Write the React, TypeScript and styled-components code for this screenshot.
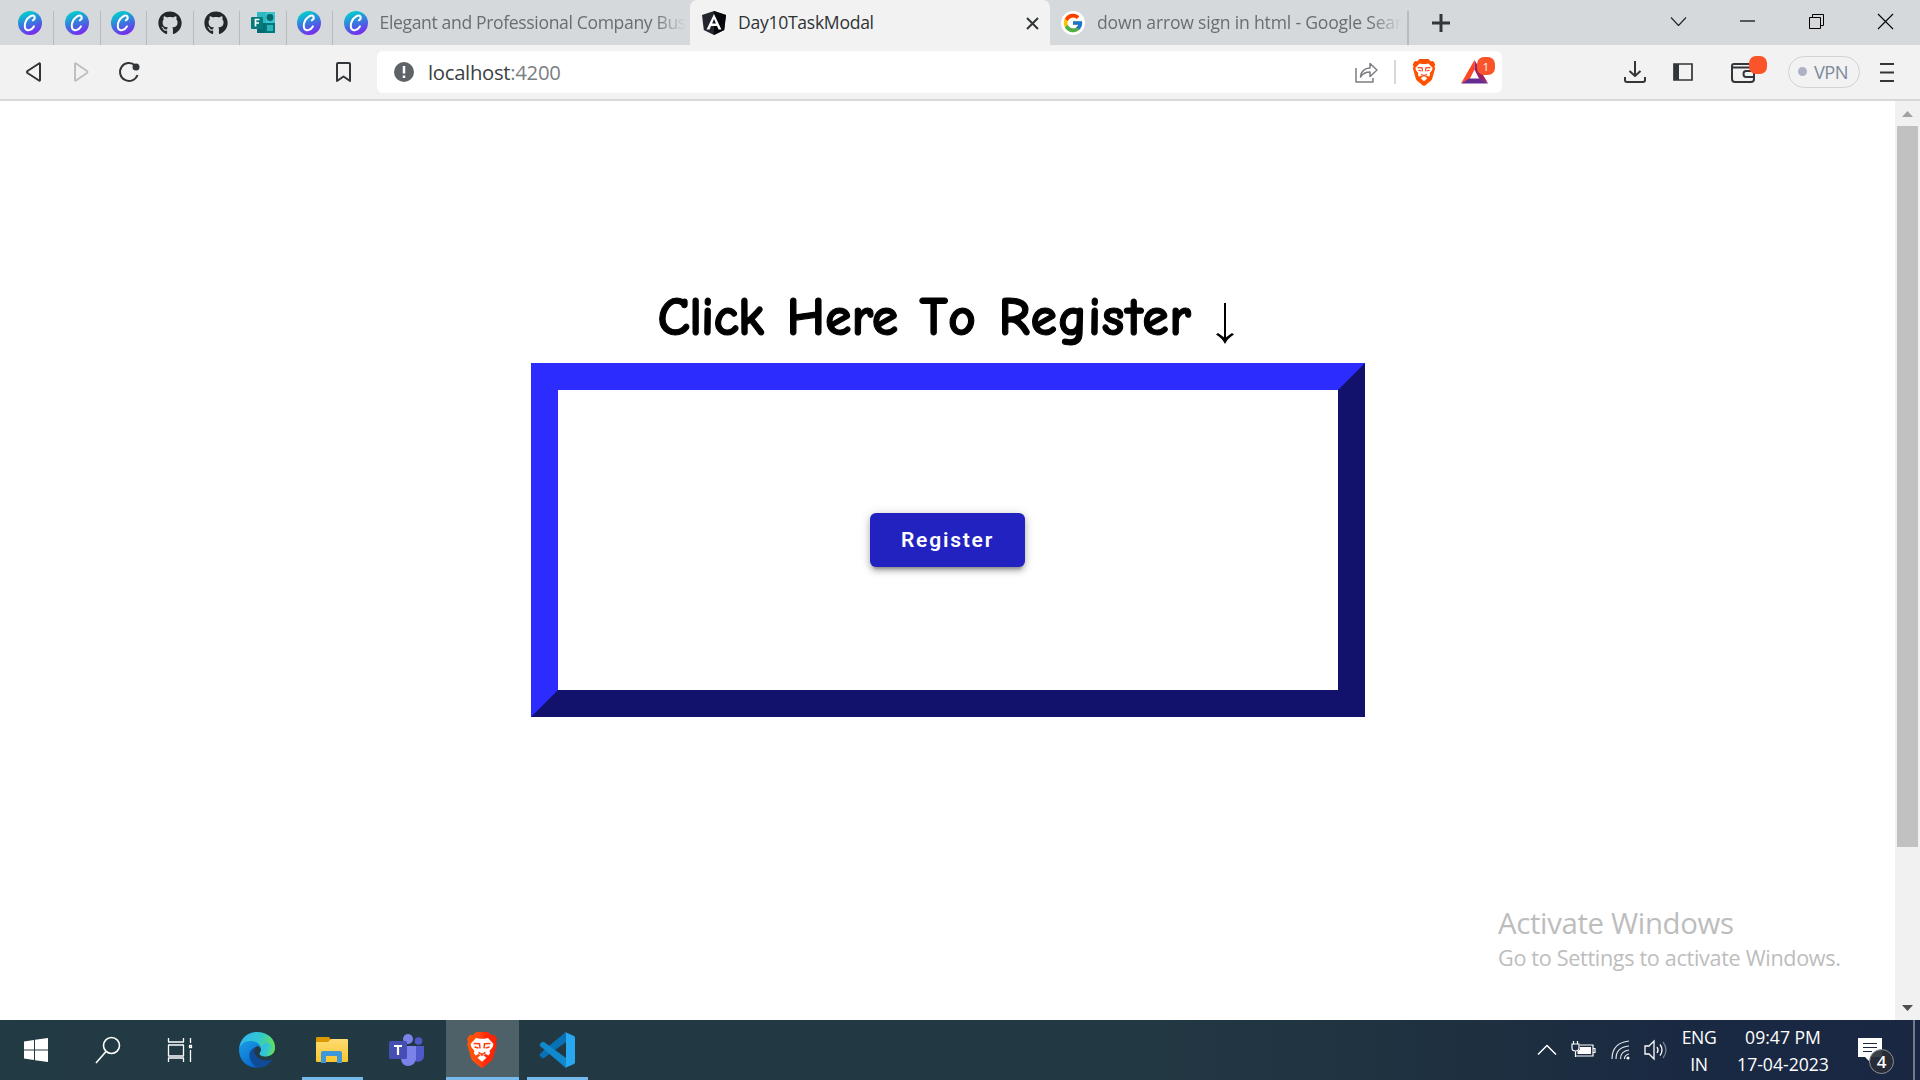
import React from "react";
import styled, { createGlobalStyle, css } from "styled-components";
import { FaGithub } from "react-icons/fa";
import { FcGoogle } from "react-icons/fc";

const Global = createGlobalStyle`
  *{box-sizing:border-box}
  body{margin:0;background:#fff;font-family:"Open Sans","Noto Sans",sans-serif}
  svg{display:block;flex:none;overflow:visible}
`;
const Screen = styled.div`width:1920px;height:1080px;display:flex;flex-direction:column;overflow:hidden;`;
const TabStrip = styled.div`height:45px;display:flex;background:#d5d9dc;color:#6a6e71;`;
const PinnedTab = styled.div<{ $w: number }>`
  width:${p => p.$w}px;height:34px;margin-top:11px;padding-right:11px;
  display:flex;justify-content:flex-end;align-items:flex-start;
  border-right:1.5px solid #b8bcbe;flex:none;
`;
const Tab = styled.div<{ $w: number; $active?: boolean; $pad: number }>`
  width:${p => p.$w}px;height:45px;padding:11px 6px 0 ${p => p.$pad}px;display:flex;gap:12px;flex:none;
  ${p => p.$active && css`background:#f2f2f2;border-radius:7px 7px 0 0;color:#2f3235;`}
`;
const TabTitle = styled.span<{ $ls: number; $fade?: boolean; $medium?: boolean }>`
  flex:1;font-size:17.6px;line-height:23px;white-space:nowrap;letter-spacing:${p => p.$ls}px;
  font-weight:${p => (p.$medium ? 500 : 400)};
  ${p => p.$fade && css`mask-image:linear-gradient(90deg,#000 calc(100% - 32px),transparent);`}
`;
const TabDivider = styled.i`width:1.5px;height:34px;margin-top:11px;background:#b8bcbe;flex:none;`;
const TabClose = styled.div`width:24px;height:24px;display:grid;place-items:center;`;
const NewTab = styled.div`width:65px;display:grid;place-items:center;`;
const WindowButtons = styled.div`margin-left:auto;display:flex;height:42px;`;
const WindowButton = styled.div`width:69px;display:grid;place-items:center;`;
const Toolbar = styled.div`height:56px;display:flex;align-items:center;background:#f2f2f2;border-bottom:2px solid #d5d9dc;`;
const NavButtons = styled.div`width:377px;display:flex;padding:0 23px;align-items:center;`;
const NavSlot = styled.div<{ $w: number }>`width:${p => p.$w}px;display:flex;`;
const Address = styled.div`
  width:1125px;height:42px;background:#fff;border-radius:6px;display:flex;align-items:center;padding:0 8px 0 17px;
`;
const Url = styled.span`margin-left:14px;font-size:20.3px;letter-spacing:-.3px;color:#3c3f42;flex:1;span{color:#7b7e81}`;
const AddressDivider = styled.i`width:2px;height:24px;background:#d6d8da;margin:0 16px;`;
const RewardsWrap = styled.div`position:relative;margin-left:25px;margin-right:6px;`;
const RewardsBadge = styled.span`
  position:absolute;left:16px;top:-3px;width:18px;height:18px;border-radius:7px;background:#fb542b;color:#fff;
  font-size:11px;line-height:19px;text-align:center;
`;
const Tools = styled.div`flex:1;display:flex;align-items:center;padding-left:122px;`;
const Tool = styled.div<{ $w: number }>`width:${p => p.$w}px;flex:none;display:flex;`;
const Vpn = styled.div`
  width:72px;height:32px;border:1.5px solid #d0d3d6;border-radius:16px;display:flex;align-items:center;gap:7px;
  padding:0 0 2px 9px;color:#7d8a9b;font-size:18.3px;letter-spacing:-.6px;margin-right:20px;
`;
const VpnDot = styled.i`width:9px;height:9px;border-radius:50%;background:#aeb1c3;margin-top:1px;`;
const Viewport = styled.div`height:919px;display:flex;`;
const Page = styled.main`flex:1;display:flex;flex-direction:column;align-items:center;padding-top:182px;`;
const Heading = styled.h1`
  margin:0;width:834px;height:80px;padding-left:127px;display:flex;align-items:flex-start;
  font:700 54px/70px "Comic Sans MS","Comic Neue",Lato,sans-serif;color:#000;white-space:nowrap;
  -webkit-text-stroke:1.1px #000;
`;
const Word = styled.span<{ $w: number; $ls: number }>`width:${p => p.$w}px;letter-spacing:${p => p.$ls}px;`;
const ArrowSlot = styled.span`padding-top:20px;`;
const Frame = styled.section`
  width:834px;height:354px;border:27px solid;border-color:#2c2cff #12126c #12126c #2c2cff;
  display:grid;place-items:center;
`;
const RegisterButton = styled.button`
  width:155px;height:54px;border:0;border-radius:6px;background:#2222c1;color:#fff;padding:0;
  font:600 21px/54px Roboto,sans-serif;letter-spacing:1.8px;
  box-shadow:0 5px 3px -3px rgba(0,0,0,.24),0 4px 6px rgba(0,0,0,.22),0 1px 12px rgba(0,0,0,.16);
`;
const Scrollbar = styled.div`
  width:25px;background:#f1f1f1;display:flex;flex-direction:column;align-items:center;justify-content:space-between;
`;
const ScrollArrow = styled.div`height:25px;display:grid;place-items:center;`;
const Thumb = styled.div`width:21px;height:721px;background:#c1c1c1;margin-bottom:auto;`;
const Watermark = styled.div`position:absolute;left:1498px;top:901px;color:#bdbdbd;white-space:nowrap;`;
const WatermarkTitle = styled.div`font-size:29.4px;line-height:44px;letter-spacing:-.35px;`;
const WatermarkText = styled.div`font-size:21.6px;line-height:26px;letter-spacing:-.32px;`;
const Taskbar = styled.footer`
  height:60px;display:flex;color:#fff;background:linear-gradient(90deg,#223a43 0,#223843 60%,#1e3040 77%,#1a2942 88%,#192743);
`;
const TaskItem = styled.div<{ $w: number; $line?: number; $active?: boolean }>`
  width:${p => p.$w}px;height:60px;display:flex;align-items:center;justify-content:center;flex:none;
  ${p => p.$line && css`padding-right:1px;`}
  ${p => p.$active && css`background-color:#4e6169;`}
  ${p => p.$line && css`background-image:linear-gradient(#76b9ed,#76b9ed);background-size:${p.$line}px 3px;background-position:center bottom;background-repeat:no-repeat;`}
`;
const Tray = styled.div`margin-left:auto;display:flex;align-items:center;`;
const TraySlot = styled.div<{ $w: number }>`width:${p => p.$w}px;display:flex;justify-content:center;`;
const TrayText = styled.div<{ $w: number; $ls: number }>`
  width:${p => p.$w}px;font-size:17.6px;line-height:27.5px;text-align:center;letter-spacing:${p => p.$ls}px;white-space:nowrap;padding-top:2px;
`;
const Notify = styled.div`width:74px;position:relative;display:flex;padding-left:19px;`;
const Count = styled.span`
  position:absolute;left:30px;top:11px;width:25px;height:25px;border-radius:50%;background:#292d35e8;border:1px solid #8b8f98;
  font-size:17px;font-weight:600;line-height:23px;text-align:center;
`;
const ShowDesktop = styled.i`width:7px;height:60px;border-left:2px solid #74798a;`;

const Canva = () => (
  <svg width="24" height="24" viewBox="0 0 24 24">
    <defs>
      <linearGradient id="cv" x1=".3" y1="0" x2=".65" y2="1"><stop offset=".1" stopColor="#08c5cf" /><stop offset=".5" stopColor="#3979df" /><stop offset="1" stopColor="#7d24ee" /></linearGradient>
    </defs>
    <circle cx="12" cy="12" r="12" fill="url(#cv)" />
    <path d="M14.800 9.300c1.400-.6 2.200-2.300 1.700-3.700-.6-1.500-2.500-1.500-4.300-.2C8.600 7.800 6.700 11.700 6.800 15.200c.1 3 1.900 4.500 4.400 3.900 2-.5 3.700-1.900 4.700-3.700" fill="none" stroke="#fff" strokeWidth="2" strokeLinecap="round" />
  </svg>
);
const Forms = () => (
  <svg width="24" height="24" viewBox="0 0 24 24">
    <path fill="#37c6d0" d="M6 1h18v11H6z" /><path fill="#036c70" d="M6 12h9v10H6z" /><path fill="#1a9ba1" d="M6 1h9v11H6z" opacity=".3" />
    <path fill="#03787c" d="M14 12h10v10H14z" /><path fill="#2bb4ba" d="M16 14h6v6h-6z" /><circle cx="19" cy="6.500" r="3.400" fill="#05686c" />
    <rect y="6" width="12" height="12" rx="1" fill="#077a7d" />
    <path d="M4.500 15.500v-7h4M4.500 12h3.500" fill="none" stroke="#fff" strokeWidth="1.700" />
  </svg>
);
const Angular = () => (
  <svg width="24" height="24" viewBox="0 0 24 24">
    <path d="M12 0l12 4-1.800 15L12 24 1.800 19 0 4z" fill="#23262e" /><path d="M12 0l12 4-1.800 15L12 24z" fill="#05070b" />
    <path fillRule="evenodd" d="M12 3L4.600 18.500h2.900L9 15h6l1.500 3.500h2.900zM10.100 12.500L12 8l1.900 4.500z" fill="#fff" />
  </svg>
);
const BraveLion = ({ w, h }: { w: number; h: number }) => (
  <svg width={w} height={h} viewBox="0 0 30 36">
    <defs><linearGradient id="lion"><stop stopColor="#ff5500" /><stop offset=".4" stopColor="#ff4a10" /><stop offset=".6" stopColor="#ff2b0a" /><stop offset="1" stopColor="#ff2000" /></linearGradient></defs>
    <path d="M9 0h12l3 3 3-.3 3 4.300-1 3 .8 2.500L26 26q-.7 2.500-3 4l-6.500 5.200q-1.500 1-3 0L7 30q-2.300-1.500-3-4L.2 12.500 1 10 0 7l3-4.300 3 .3z" fill={w > 26 ? "url(#lion)" : "#ff5000"} />
    <path d="M9 6l3.500.8h5L21 6l5.500 6-.8 3-3.200 4 .7 2-1.700 2.500-3-1.500-2.200 1.300 3.200 2.500-4.500 4-4.500-4 3.200-2.500L11.500 22l-3 1.500L6.800 21l.7-2-3.200-4-.8-3z" fill="#fff" />
    <path d="M6.500 11.500l6 .3.500 4.500M23.500 11.500l-6 .3-.5 4.500M7.500 15l4 1M22.500 15l-4 1M11.500 20.500l3.500 1.800 3.500-1.800M15 22v2" fill="none" stroke="#ff3d0d" strokeWidth="1.500" />
  </svg>
);
const Edge = () => (
  <svg width="36" height="36" viewBox="0 0 36 36">
    <defs>
      <linearGradient id="e1" x1="0" y1=".2" x2="1" y2=".5"><stop stopColor="#30b4f0" /><stop offset=".55" stopColor="#31c8cf" /><stop offset="1" stopColor="#67e34e" /></linearGradient>
      <linearGradient id="e2" x1="0" y1="0" x2=".6" y2="1"><stop stopColor="#1c9de4" /><stop offset="1" stopColor="#0669d0" /></linearGradient>
    </defs>
    <path d="M0 17C1 7 8 0 18 0c11 0 18 7 18 15 0 6-4 9.500-9.500 9.500-4 0-6-1.500-6-2.700 0-1 1.500-1.500 1.500-4 0-4-4-7-9.500-7C6 10.800 1.500 14 0 17z" fill="url(#e1)" />
    <path d="M0 18c.5-5 5-9 11-9 7 0 11 4 11 8-1-2-3-3-5-2-4 2-7 15 6 19.500C13 38.500 0 31 0 18z" fill="url(#e2)" />
    <path d="M16 15c-4 3-5 4-5.500 7C10 29 15 35.500 21 35.500c5 0 9-3 12.500-8 .5-.9-.3-1.300-1-.8-3 1.600-8 2-12-.2-5-2.800-6.500-7.500-4.500-11.500z" fill="#114a96" />
    <path d="M22 18c-.5 2-1.600 2.700-1.500 3.800.1 1.200 2 2.700 6 2.700 3 0 5.600-1 7.300-3L36 26l-3 1.500c-4 1.500-9 1-12.500-1-3.500-2-5.500-6-4.500-10 .6-1.700 2-2.500 3.200-2.300z" fill="#223a43" />
    <path d="M22 18c0 2-1.500 2.800-1.500 3.800.1 1.200 2 2.700 6 2.700C32 24.500 36 21 36 15l-9-5-5 5z" fill="url(#e1)" />
  </svg>
);
const Folder = () => (
  <svg width="32" height="27" viewBox="0 0 32 27">
    <defs><linearGradient id="fd" x2="0" y2="1"><stop stopColor="#ffdc73" /><stop offset="1" stopColor="#f9c62f" /></linearGradient></defs>
    <path d="M0 1q0-1 1-1h12l2 3-3 5H0z" fill="#dc9800" /><path d="M0 5h12l3-3h16q1 0 1 1v21q0 1-1 1H1q-1 0-1-1z" fill="url(#fd)" />
    <path d="M5 26V16q0-2 2-2h17q2 0 2 2v10h-5v-7H10v7z" fill="#3e97d9" />
  </svg>
);
const Teams = () => (
  <svg width="35" height="32" viewBox="0 0 35 32">
    <circle cx="29.500" cy="7" r="3.800" fill="#5059c9" /><circle cx="19" cy="5" r="5" fill="#7b83eb" />
    <path d="M24 12h11v10a6 6 0 01-11 3z" fill="#5059c9" /><path d="M12 12h15v12c0 5-4 8-8 8s-7-3-7-8z" fill="#7b83eb" />
    <rect y="7" width="18" height="18" rx="1.500" fill="#454eb3" /><path d="M5 12h8M9 12v9" stroke="#fff" strokeWidth="2.200" />
  </svg>
);
const VSCode = () => (
  <svg width="36" height="36" viewBox="0 0 36 36">
    <path d="M1 22l5-5L27 0v10L5 26q-1 .7-2 0l-2-2q-1-1 0-2z" fill="#0871b5" />
    <path d="M1 14q-1-1 0-2l2-2q1-.6 2 0l22 16v10z" fill="#1189cd" />
    <path d="M26 0l9 4q1 .6 1 2v24q0 1.400-1 2l-9 4q1-.5 1-2V2q0-1.500-1-2z" fill="#28a8f0" />
  </svg>
);
const pinnedWidths = [54, 46.5, 46.5, 46.5, 46, 47, 46];
const pins = [Canva, Canva, Canva, FaGithub, FaGithub, Forms, Canva];
const Stroke = ({ w, h, d, c = "#323639", t = 2 }: { w: number; h: number; d: string; c?: string; t?: number }) => (
  <svg width={w} height={h} viewBox={`0 0 ${w} ${h}`} fill="none" stroke={c} strokeWidth={t} strokeLinejoin="round"><path d={d} /></svg>
);

export default function App() {
  return (
    <Screen>
      <Global />
      <TabStrip>
        {pins.map((Icon, i) => <PinnedTab key={i} $w={pinnedWidths[i]}><Icon size={24} color="#23272b" /></PinnedTab>)}
        <Tab $w={357.5} $pad={11}><Canva /><TabTitle $ls={-0.37} $fade>Elegant and Professional Company Bus</TabTitle></Tab>
        <Tab $w={360} $pad={12} $active><Angular /><TabTitle $ls={-0.3} $medium>Day10TaskModal</TabTitle><TabClose><Stroke w={11} h={11} d="M0 0l11 11M11 0L0 11" /></TabClose></Tab>
        <Tab $w={357} $pad={11}>
          <svg width="24" height="24" viewBox="0 0 24 24"><circle cx="12" cy="12" r="12" fill="#fff" /><FcGoogle x={1} y={1} size={22} /></svg>
          <TabTitle $ls={-0.2} $fade>down arrow sign in html - Google Sear</TabTitle>
        </Tab>
        <TabDivider />
        <NewTab><Stroke w={18} h={18} d="M9 0v18M0 9h18" t={3} /></NewTab>
        <WindowButtons>
          <WindowButton><Stroke w={15} h={9} d="M0 .5l7.500 8 7.500-8" c="#222" t={1.1} /></WindowButton>
          <WindowButton><Stroke w={15} h={2} d="M0 1h15" c="#000" t={1.2} /></WindowButton>
          <WindowButton><Stroke w={15} h={15} d="M.5 3.500h11v11H.5zM3.500 3V.5h11v11h-2.500" c="#000" t={1} /></WindowButton>
          <WindowButton><Stroke w={15} h={15} d="M0 0l15 15M15 0L0 15" c="#000" t={1.1} /></WindowButton>
        </WindowButtons>
      </TabStrip>
      <Toolbar>
        <NavButtons>
          <NavSlot $w={50}><Stroke w={20} h={20} d="M17 2v16q0 1-1 .5L4.500 11q-1-1 0-2L16 1.500q1-.5 1 .5z" /></NavSlot>
          <NavSlot $w={46}><Stroke w={20} h={20} d="M2 2v16q0 1 1 .5L14 11q1-1 0-2L3 1.500Q2 1 2 2z" c="#bdbfc0" /></NavSlot>
          <NavSlot $w={216}>
            <svg width="21" height="21" viewBox="0 0 21 21"><path d="M16 3.200A9 9 0 1018.500 13" fill="none" stroke="#323639" strokeWidth="2" /><circle cx="17" cy="5" r="3.500" fill="#323639" /></svg>
          </NavSlot>
          <Stroke w={16} h={20} d="M2 2q0-1 1-1h11q1 0 1 1v17l-6.500-4.500L2 19z" />
        </NavButtons>
        <Address>
          <svg width="20" height="20" viewBox="0 0 20 20"><circle cx="10" cy="10" r="10" fill="#5e6368" /><path d="M10 4v7.500M10 13.500V16" stroke="#fff" strokeWidth="2.500" /></svg>
          <Url>localhost<span>:4200</span></Url>
          <Stroke w={23} h={21} d="M1 6v14h17v-4M5.500 15c0-5 4-9 9.500-9V1.500L22 8l-7 6.500V10c-4 0-7 1-9.500 5z" c="#7b7d80" t={1.5} />
          <AddressDivider />
          <BraveLion w={24} h={27} />
          <RewardsWrap>
            <svg width="27" height="24" viewBox="0 0 27 24"><path d="M13.500 0L0 23.500l9-5 4.500-9z" fill="#ff4724" /><path d="M13.500 0L27 23.500l-9-5-4.500-9z" fill="#9e1f63" /><path d="M0 23.500h27l-8-5H8z" fill="#662d91" /></svg>
            <RewardsBadge>1</RewardsBadge>
          </RewardsWrap>
        </Address>
        <Tools>
          <Tool $w={49}><Stroke w={22} h={22} d="M11 0v15M5.500 10l5.500 5 5.500-5M1 16v3q0 2 2 2h16q2 0 2-2v-3" /></Tool>
          <Tool $w={58}><svg width="20" height="18" viewBox="0 0 20 18"><path d="M1 1h18v16H1z" fill="none" stroke="#323639" strokeWidth="1.700" /><path d="M1 1h5v16H1z" fill="#323639" /></svg></Tool>
          <Tool $w={57}><svg width="36" height="32" viewBox="0 0 36 32"><path d="M23 10V9q0-1-2-1H3Q1 8 1 10v13q0 3 3 3h16q3 0 3-3v-1M1 11.500h20M23 15h-8q-2.500 0-2.500 3t2.500 3h8z" fill="none" stroke="#323639" strokeWidth="2" /><rect x="18" y="0" width="18" height="18" rx="7" fill="#fb542b" /></svg></Tool>
          <Vpn><VpnDot />VPN</Vpn>
          <Stroke w={14} h={19} d="M0 1h14M0 9.500h14M0 18h14" t={2.2} />
        </Tools>
      </Toolbar>
      <Viewport>
        <Page>
          <Heading><Word $w={129} $ls={-0.8}>Click</Word><Word $w={133} $ls={0}>Here</Word><Word $w={79} $ls={4.5}>To</Word><Word $w={217} $ls={0.6}>Register</Word><ArrowSlot><svg width="18" height="42" viewBox="0 0 18 42"><path d="M9 0v38" stroke="#000" strokeWidth="2" /><path d="M9 41Q6 35 0 31.500L2 30l7 5 7-5 2 1.500Q12 35 9 41z" /></svg></ArrowSlot></Heading>
          <Frame><RegisterButton>Register</RegisterButton></Frame>
        </Page>
        <Scrollbar>
          <ScrollArrow><svg width="11" height="6"><path d="M0 6l5.500-6L11 6z" fill="#a3a3a3" /></svg></ScrollArrow>
          <Thumb />
          <ScrollArrow><svg width="11" height="6"><path d="M0 0l5.500 6L11 0z" fill="#505050" /></svg></ScrollArrow>
        </Scrollbar>
      </Viewport>
      <Watermark><WatermarkTitle>Activate Windows</WatermarkTitle><WatermarkText>Go to Settings to activate Windows.</WatermarkText></Watermark>
      <Taskbar>
        <TaskItem $w={72}><svg width="24" height="24" viewBox="0 0 24 24" fill="#fff"><path d="M0 3.500l10-1.500v9.500H0zM11 1.800L24 0v11.500H11zM0 12.500h10V22L0 20.500zM11 12.500h13V24l-13-1.800z" /></svg></TaskItem>
        <TaskItem $w={72}><svg width="24" height="28" viewBox="0 0 24 28" fill="none" stroke="#fff" strokeWidth="1.600"><circle cx="15.500" cy="9.500" r="8" /><path d="M10 15.500L0 27" /></svg></TaskItem>
        <TaskItem $w={72}><Stroke w={25} h={24} d="M.5 0v4h15V0M.5 7h15v11H.5zM.5 24v-4h15v4M22.500 0v5M22.500 12v12M21.500 7.500h2v2h-2z" c="#fff" t={1.3} /></TaskItem>
        <TaskItem $w={82}><Edge /></TaskItem>
        <TaskItem $w={69} $line={61}><Folder /></TaskItem>
        <TaskItem $w={79}><Teams /></TaskItem>
        <TaskItem $w={73} $active $line={73}><BraveLion w={30} h={36} /></TaskItem>
        <TaskItem $w={77} $line={61}><VSCode /></TaskItem>
        <Tray>
          <TraySlot $w={36}><Stroke w={18} h={10} d="M0 9.500L9 .5l9 9" c="#fff" t={1.5} /></TraySlot>
          <TraySlot $w={37}><svg width="25" height="18" viewBox="0 0 25 18" fill="none" stroke="#fff" strokeWidth="1.200"><path d="M9 4h13v11H5M22 7.500h2v4h-2M1 3h7v4q0 3-3.500 3T1 7zM2.500 3V0M6.500 3V0M4.500 10v6" /><path d="M9 6h11v7H6.500v-2.500l2.500-2z" fill="#fff" stroke="none" /></svg></TraySlot>
          <TraySlot $w={37}><svg width="19" height="20" viewBox="0 0 19 20" fill="none" stroke="#e2e6ea" strokeWidth="1.200"><path d="M1 19Q1 3 18 1M5 19Q5 7 18 6M9.500 19q0-8 8.500-9M13.500 19q0-4 4.500-5" /><circle cx="17" cy="18" r="1.500" fill="#fff" stroke="none" /></svg></TraySlot>
          <TraySlot $w={32}><svg width="23" height="20" viewBox="0 0 23 20" fill="none" stroke="#fff" strokeWidth="1.300"><path d="M1 6h4l5-5v18l-5-5H1z" /><path d="M13 7q2 3 0 6M16 4.500q4 5.500 0 11" /><path d="M19 2q6 8 0 16" opacity=".4" /></svg></TraySlot>
          <TrayText $w={56} $ls={-0.4}>ENG<br />IN</TrayText>
          <TrayText $w={112} $ls={0}>09:47 PM<br />17-04-2023</TrayText>
          <Notify><svg width="24" height="24" viewBox="0 0 24 24"><path d="M0 0h24v19H12v5l-5-5H0z" fill="#fff" /><path d="M5 5.500h14M5 9.500h14M5 13.500h9" stroke="#192743" strokeWidth="1.200" /></svg><Count>4</Count></Notify>
          <ShowDesktop />
        </Tray>
      </Taskbar>
    </Screen>
  );
}
